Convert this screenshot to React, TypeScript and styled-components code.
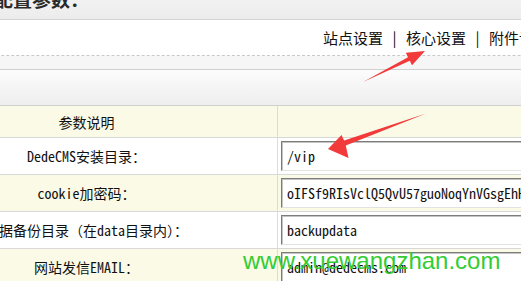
import React from "react";
import styled, { createGlobalStyle } from "styled-components";

const Global = createGlobalStyle`
  html, body { margin: 0; padding: 0; background: #ffffff; }
  #root { width: 521px; height: 281px; }
`;

const Frame = styled.div`
  position: relative;
  width: 521px;
  height: 281px;
  overflow: hidden;
  background: #ffffff;
`;

const Page = styled.div`
  margin-left: -104px;
  margin-top: -18px;
  width: 800px;
  display: flex;
  flex-direction: column;
`;

const TitleBar = styled.div`
  height: 38px;
  box-sizing: border-box;
  padding-left: 60px;
  background: linear-gradient(#f7f7f7, #ececec);
  border-bottom: 1px solid #d3d3d3;
  font-family: "Noto Sans CJK SC", sans-serif;
  font-size: 19px;
  font-weight: bold;
  line-height: 34px;
  color: #2a2a2a;
`;

const NavBar = styled.div`
  height: 36px;
  box-sizing: border-box;
  border-bottom: 1px dashed #c8c8c8;
  background: #ffffff;
  display: flex;
  align-items: center;
  padding-left: 427px;
  font-family: "Noto Sans CJK SC", sans-serif;
  font-size: 15px;
  color: #111;
`;

const NavLink = styled.span`
  white-space: nowrap;
`;

const NavSep = styled.span`
  width: 23px;
  text-align: center;
  flex: none;
`;

const Strip = styled.div`
  height: 14px;
  box-sizing: border-box;
  background: #f6f6f6;
  border-bottom: 1px solid #cfcfcf;
`;

const Band = styled.div`
  height: 36px;
  box-sizing: border-box;
  background: linear-gradient(#fcfcfc, #eeeeee);
  border-bottom: 1px solid #d0d0d0;
`;

const Table = styled.div`
  display: grid;
  grid-template-columns: 382px 1fr;
  font-family: "Noto Sans Mono CJK SC", "Noto Sans CJK SC", monospace;
  font-size: 14px;
  color: #111;
`;

const Row = styled.div<{ $yellow?: boolean; $head?: boolean }>`
  display: contents;
  & > * {
    background: ${(p) => (p.$yellow ? "#fafae6" : "#ffffff")};
    height: ${(p) => (p.$head ? "32px" : "37px")};
    box-sizing: border-box;
    border-bottom: 1px solid #d8d8d8;
  }
`;

const LabelCell = styled.div`
  border-right: 1px solid #dcdcdc;
  display: flex;
  align-items: center;
  justify-content: center;
  white-space: nowrap;
  overflow: visible;
`;

const ValueCell = styled.div`
  display: flex;
  align-items: center;
  padding-left: 3px;
  overflow: hidden;
`;

const Field = styled.div`
  width: 420px;
  height: 30px;
  box-sizing: border-box;
  border-top: 1px solid #7c7c7c;
  border-left: 1px solid #7c7c7c;
  border-right: 1px solid #e2e2e2;
  border-bottom: 1px solid #e2e2e2;
  box-shadow: inset 1px 1px 0 #c4c4c4;
  background: #ffffff;
  padding-left: 5px;
  display: flex;
  align-items: center;
  white-space: nowrap;
  overflow: hidden;
`;

const Overlay = styled.svg`
  position: absolute;
  left: 0;
  top: 0;
  pointer-events: none;
`;

const Watermark = styled.div`
  position: absolute;
  left: 243px;
  top: 249px;
  font-family: "Liberation Sans", Arial, sans-serif;
  font-size: 24px;
  line-height: 24px;
  color: #33cc33;
  white-space: nowrap;
`;

const rows = [
  { label: "DedeCMS安装目录：", value: "/vip", yellow: false },
  { label: "cookie加密码：", value: "oIFSf9RIsVclQ5QvU57guoNoqYnVGsgEhHrT", yellow: true },
  { label: "数据备份目录（在data目录内）：", value: "backupdata", yellow: false },
  { label: "网站发信EMAIL：", value: "admin@dedecms.com", yellow: true },
];

export default function App() {
  return (
    <Frame>
      <Global />
      <Page>
        <TitleBar>系统配置参数：</TitleBar>
        <NavBar>
          <NavLink>站点设置</NavLink>
          <NavSep>|</NavSep>
          <NavLink>核心设置</NavLink>
          <NavSep>|</NavSep>
          <NavLink>附件设置</NavLink>
        </NavBar>
        <Strip />
        <Band />
        <Table>
          <Row $yellow $head>
            <LabelCell>参数说明</LabelCell>
            <ValueCell />
          </Row>
          {rows.map((r) => (
            <Row key={r.label} $yellow={r.yellow}>
              <LabelCell>{r.label}</LabelCell>
              <ValueCell>
                <Field>{r.value}</Field>
              </ValueCell>
            </Row>
          ))}
        </Table>
      </Page>
      <Overlay width="521" height="281" viewBox="0 0 521 281">
        <polygon
          fill="#f23a3a"
          points="363,82 408,57.3 405.8,52.8 425,51 412,65.3 409.8,60.8"
        />
        <polygon
          fill="#f23a3a"
          points="426,113.5 344.1,140.6 341.5,135 328,149 348.5,158 345.8,145.5"
        />
      </Overlay>
      <Watermark>www.xuewangzhan.com</Watermark>
    </Frame>
  );
}
